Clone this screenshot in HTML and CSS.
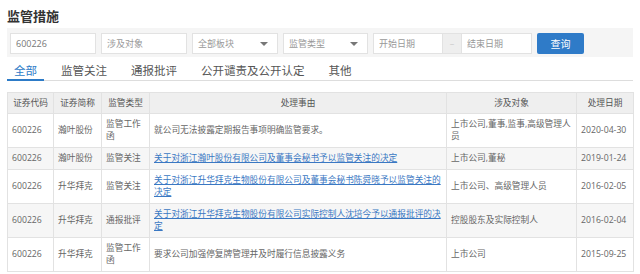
FILE: index.html
```html
<!DOCTYPE html>
<html lang="zh-CN">
<head>
    <meta charset="UTF-8">
    <meta name="viewport" content="width=device-width, initial-scale=1.0">
    <title>监管措施</title>
    <link rel="stylesheet" href="styles.css">
</head>
<body>
    <div class="page">
        <h2 class="title">监管措施</h2>

        <div class="filter-bar">
            <input class="field w86" type="text" value="600226">
            <input class="field w86" type="text" placeholder="涉及对象">
            <div class="select w86"><span>全部板块</span><i class="arrow"></i></div>
            <div class="select w85"><span>监管类型</span><i class="arrow"></i></div>
            <div class="date-range">
                <input class="field w70" type="text" placeholder="开始日期">
                <span class="dash">–</span>
                <input class="field w71" type="text" placeholder="结束日期">
            </div>
            <button class="search-btn">查询</button>
        </div>

        <div class="tabs">
            <span class="tab active">全部</span>
            <span class="tab">监管关注</span>
            <span class="tab">通报批评</span>
            <span class="tab">公开谴责及公开认定</span>
            <span class="tab">其他</span>
        </div>

        <table class="grid">
            <colgroup>
                <col style="width:46px">
                <col style="width:48px">
                <col style="width:48px">
                <col style="width:297px">
                <col style="width:130px">
                <col style="width:57px">
            </colgroup>
            <thead>
                <tr>
                    <th>证券代码</th>
                    <th>证券简称</th>
                    <th>监管类型</th>
                    <th>处理事由</th>
                    <th>涉及对象</th>
                    <th>处理日期</th>
                </tr>
            </thead>
            <tbody>
                <tr>
                    <td>600226</td>
                    <td>瀚叶股份</td>
                    <td>监管工作函</td>
                    <td>就公司无法披露定期报告事项明确监管要求。</td>
                    <td>上市公司,董事,监事,高级管理人员</td>
                    <td>2020-04-30</td>
                </tr>
                <tr>
                    <td>600226</td>
                    <td>瀚叶股份</td>
                    <td>监管关注</td>
                    <td><a href="#">关于对浙江瀚叶股份有限公司及董事会秘书予以监管关注的决定</a></td>
                    <td>上市公司,董秘</td>
                    <td>2019-01-24</td>
                </tr>
                <tr>
                    <td>600226</td>
                    <td>升华拜克</td>
                    <td>监管关注</td>
                    <td><a href="#">关于对浙江升华拜克生物股份有限公司及董事会秘书陈舜晓予以监管关注的决定</a></td>
                    <td>上市公司、高级管理人员</td>
                    <td>2016-02-05</td>
                </tr>
                <tr>
                    <td>600226</td>
                    <td>升华拜克</td>
                    <td>通报批评</td>
                    <td><a href="#">关于对浙江升华拜克生物股份有限公司实际控制人沈培今予以通报批评的决定</a></td>
                    <td>控股股东及实际控制人</td>
                    <td>2016-02-04</td>
                </tr>
                <tr>
                    <td>600226</td>
                    <td>升华拜克</td>
                    <td>监管工作函</td>
                    <td>要求公司加强停复牌管理并及时履行信息披露义务</td>
                    <td>上市公司</td>
                    <td>2015-09-25</td>
                </tr>
            </tbody>
        </table>
    </div>
</body>
</html>
```

FILE: styles.css
```css
body {
    margin: 0;
    background: #fff;
    font-family: "Open Sans", "Noto Sans CJK SC", sans-serif;
    color: #666;
}
.page {
    padding: 6px 7px 0;
}
.title {
    margin: 0 0 2px;
    font-size: 13px;
    line-height: 20px;
    font-weight: bold;
    color: #333;
}

/* filter bar */
.filter-bar {
    display: flex;
    gap: 5px;
    background: #f5f5f5;
    padding: 5px 3px 3px;
}
.field, .select {
    box-sizing: border-box;
    height: 21px;
    border: 1px solid #e2e2e2;
    background: #fff;
    font-family: inherit;
    font-size: 9px;
    color: #777;
    padding: 0 5px;
    outline: none;
}
.field::placeholder {
    color: #999;
}
.w86 { width: 86px; }
.w85 { width: 85px; }
.w70 { width: 70px; }
.w71 { width: 71px; }
.select {
    display: flex;
    align-items: center;
    justify-content: space-between;
    color: #999;
}
.arrow {
    width: 0;
    height: 0;
    margin-right: 4px;
    border-left: 4px solid transparent;
    border-right: 4px solid transparent;
    border-top: 4px solid #777;
}
.date-range {
    display: flex;
}
.dash {
    box-sizing: border-box;
    width: 18px;
    height: 21px;
    line-height: 19px;
    text-align: center;
    background: #eee;
    border-top: 1px solid #e2e2e2;
    border-bottom: 1px solid #e2e2e2;
    color: #ccc;
    font-size: 9px;
}
.search-btn {
    width: 47px;
    height: 21px;
    border: none;
    border-radius: 2px;
    background: #2f7bc8;
    color: #fff;
    font-family: inherit;
    font-size: 10px;
    padding: 0;
}

/* tabs */
.tabs {
    display: flex;
    border-bottom: 1px solid #ddd;
}
.tab {
    padding: 6px 7px 0;
    margin-right: 10px;
    margin-bottom: -1px;
    font-size: 11.5px;
    line-height: 16px;
    color: #555;
    border-bottom: 2px solid transparent;
}
.tab.active {
    color: #2d7bc7;
    border-bottom-color: #2d7bc7;
}

/* table */
.grid {
    margin-top: 11px;
    width: 626px;
    table-layout: fixed;
    border-collapse: collapse;
    font-size: 8.7px;
    line-height: 12px;
}
.grid th, .grid td {
    border: 1px solid #e2e2e2;
    padding: 4px 4px 5px;
    vertical-align: middle;
    text-align: left;
}
.grid th {
    padding: 4px;
    background: #efefef;
    color: #555;
    font-weight: normal;
    text-align: center;
}
.grid tbody tr:nth-child(even) td {
    background: #f6f6f6;
}
.grid a {
    color: #3a78c3;
    text-decoration: underline;
}
```
